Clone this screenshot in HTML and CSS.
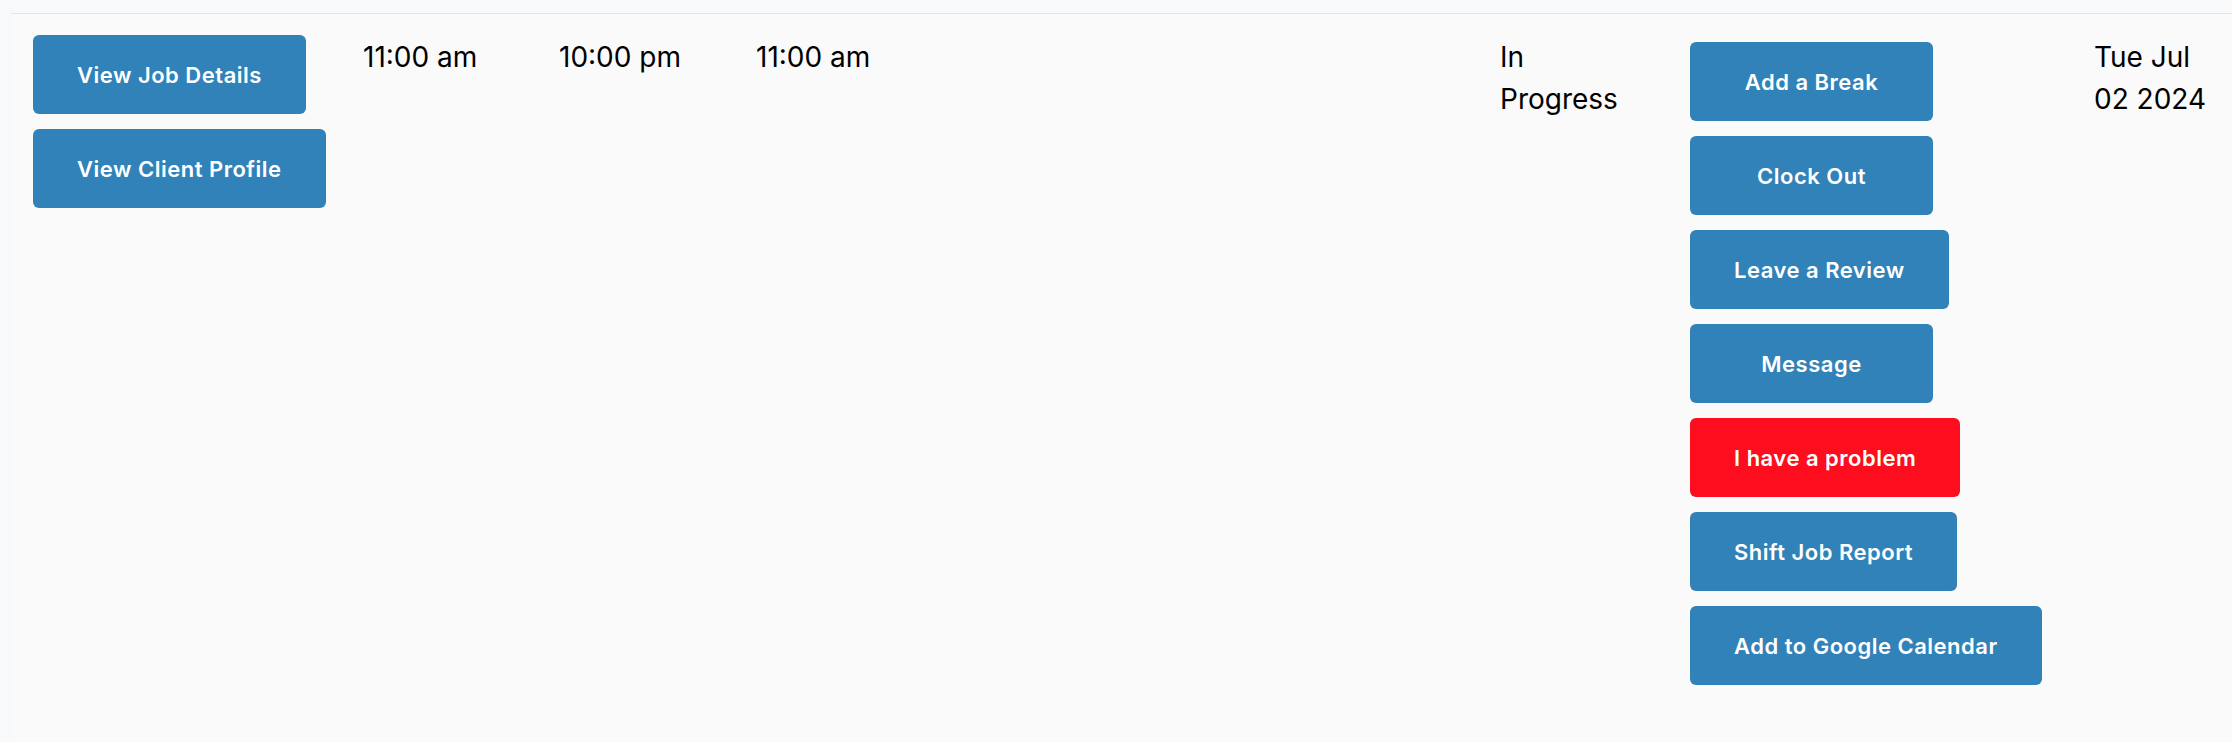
FILE: index.html
```html
<!DOCTYPE html>
<html>
  <head>
    <meta charset="utf-8" />
    <meta name="viewport" content="width=device-width, initial-scale=1.0" />
    <title>Shift Jobs</title>
    <link rel="stylesheet" href="styles.css">
  </head>
  <body>
    <div class="job-list">
      <div class="job-row">
        <div class="cell cell-links">
          <button class="button">View Job Details</button>
          <button class="button">View Client Profile</button>
        </div>
        <div class="cell cell-start">11:00 am</div>
        <div class="cell cell-end">10:00 pm</div>
        <div class="cell cell-clock">11:00 am</div>
        <div class="cell cell-status">In Progress</div>
        <div class="cell cell-actions">
          <button class="button">Add a Break</button>
          <button class="button">Clock Out</button>
          <button class="button">Leave a Review</button>
          <button class="button">Message</button>
          <button class="button button-danger">I have a problem</button>
          <button class="button">Shift Job Report</button>
          <button class="button">Add to Google Calendar</button>
        </div>
        <div class="cell cell-date">Tue Jul 02 2024</div>
      </div>
    </div>
  </body>
</html>
```

FILE: styles.css
```css
body {
  font-family: Inter, "Open Sans", sans-serif;
  margin: 0;
  padding: 0;
  background-color: #f8f9fb;
  color: #000000;
}

.job-list {
  margin: 13px 0 0 11px;
  border-top: 1px solid #e3e5ea;
  background-color: #fafafa;
  min-height: 728px;
}

.job-row {
  display: grid;
  grid-template-columns: 330px 196px 197px 744px 190px 404px 1fr;
  align-items: start;
  padding-top: 22px;
}

.cell {
  padding-left: 22px;
  font-size: 28px;
  line-height: 42px;
}

.cell-links,
.cell-actions {
  display: flex;
  flex-direction: column;
  align-items: flex-start;
  gap: 15px;
}

.cell-links {
  margin-top: -1px;
}

.cell-status {
  padding-right: 30px;
}

.cell-actions {
  padding-top: 6px;
}

.cell-date {
  padding-right: 16px;
}

.button {
  font-family: inherit;
  min-width: 243px;
  height: 79px;
  padding: 0 44px;
  background-color: #3182b9;
  color: #ffffff;
  border: none;
  border-radius: 6px;
  font-size: 22px;
  font-weight: 600;
  letter-spacing: 0.5px;
  cursor: pointer;
  white-space: nowrap;
}

.button-danger {
  background-color: #fe0d1e;
}
```
